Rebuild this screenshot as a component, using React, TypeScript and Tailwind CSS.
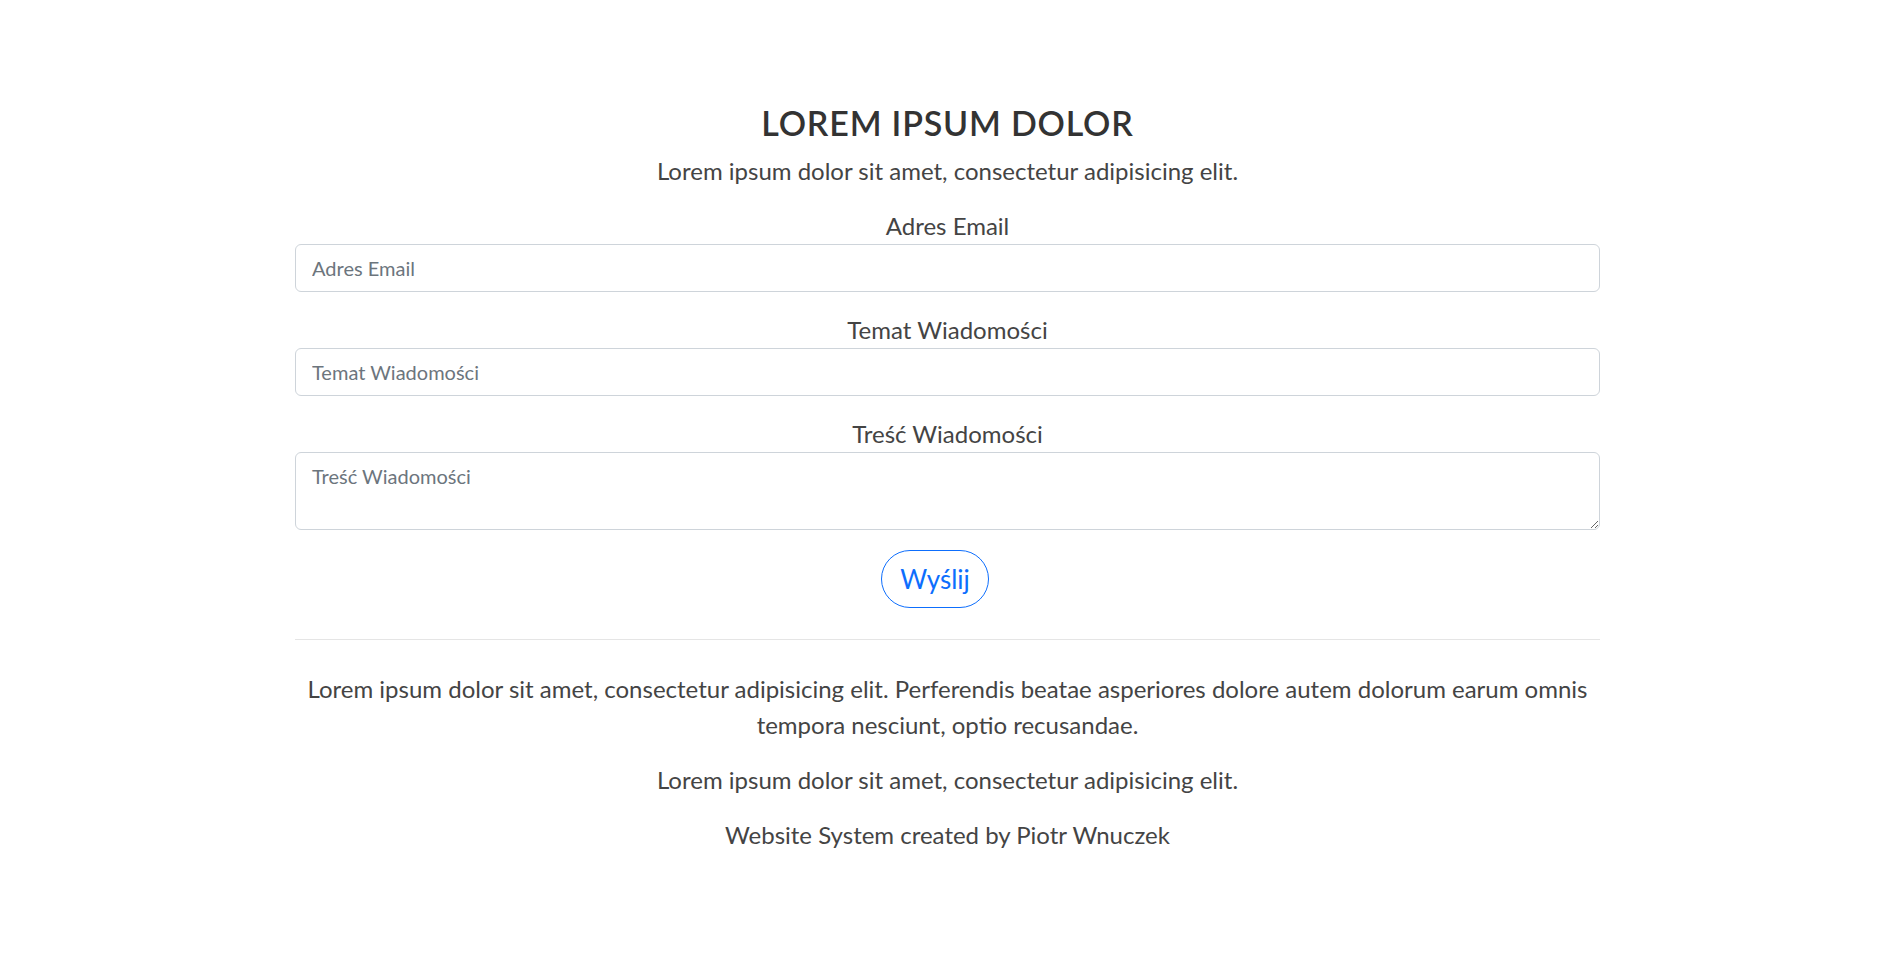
import React from "react";

const fields = [
  { id: "email", label: "Adres Email", type: "input" },
  { id: "subject", label: "Temat Wiadomości", type: "input" },
  { id: "message", label: "Treść Wiadomości", type: "textarea" },
];

const App = () => {
  return (
    <div className="min-h-[970px] bg-white font-['Lato','Liberation_Sans',sans-serif] text-[#444]">
      <div className="ml-[295px] w-[1305px] pt-[104px] text-center">
        <h2 className="mb-[11px] text-[34px] leading-[38px] font-semibold tracking-[0.8px] text-[#333]">
          LOREM IPSUM DOLOR
        </h2>
        <p className="mb-[19px] text-[24px] leading-[36px]">
          Lorem ipsum dolor sit amet, consectetur adipisicing elit.
        </p>

        <form onSubmit={(e) => e.preventDefault()}>
          {fields.map((f) => (
            <div key={f.id} className="mb-[20px] last:mb-[21px]">
              <label htmlFor={f.id} className="block text-[24px] leading-[36px]">
                {f.label}
              </label>
              {f.type === "input" ? (
                <input
                  id={f.id}
                  type="text"
                  placeholder={f.label}
                  className="block h-[48px] w-full rounded-[6px] border border-[#ced4da] bg-white px-4 py-2 text-[20px] leading-[30px] text-[#495057] placeholder:text-[#6c757d] outline-none"
                />
              ) : (
                <textarea
                  id={f.id}
                  rows={2}
                  placeholder={f.label}
                  className="block h-[78px] w-full rounded-[6px] border border-[#ced4da] bg-white px-4 py-2 text-[20px] leading-[30px] text-[#495057] placeholder:text-[#6c757d] outline-none"
                />
              )}
            </div>
          ))}
          <div className="flex justify-center pr-[25px]">
            <button
              type="submit"
              className="rounded-full border border-[#0d6efd] bg-white px-[18px] py-[10px] text-[26px] leading-[36px] text-[#0d6efd]"
            >
              Wyślij
            </button>
          </div>
        </form>

        <hr className="mt-[31px] mb-[31px] border-t border-[#e5e5e5]" />

        <footer className="text-[24px] leading-[36px]">
          <p className="mb-[19px]">
            Lorem ipsum dolor sit amet, consectetur adipisicing elit. Perferendis beatae asperiores dolore
            autem dolorum earum omnis tempora nesciunt, optio recusandae.
          </p>
          <p className="mb-[19px]">Lorem ipsum dolor sit amet, consectetur adipisicing elit.</p>
          <p>Website System created by Piotr Wnuczek</p>
        </footer>
      </div>
    </div>
  );
};

export default App;
